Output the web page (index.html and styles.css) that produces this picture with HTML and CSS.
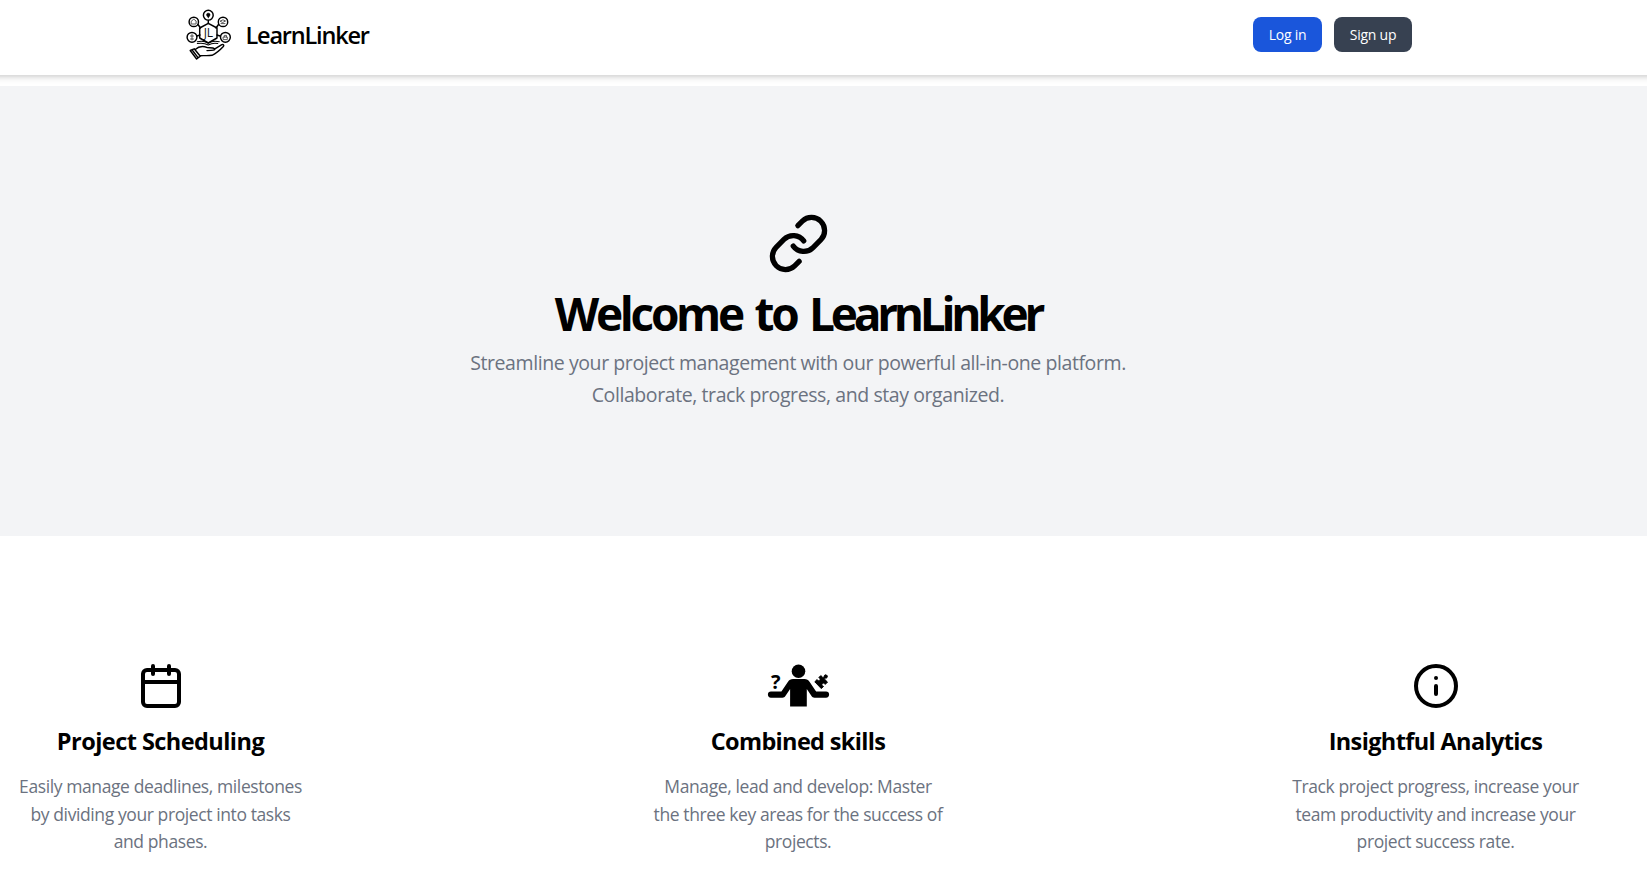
FILE: index.html
```html
<!DOCTYPE html>
<html lang="en">
<head>
<meta charset="utf-8">
<title>LearnLinker</title>
<link rel="stylesheet" href="styles.css">
</head>
<body>
<header class="site-header">
  <div class="bar">
    <a class="brand">
      <svg class="logo" viewBox="0 0 56 60" fill="none" stroke="#000" stroke-width="1.45" stroke-linejoin="round" stroke-linecap="round">
        <path d="M28.3 19.3 37 24v10l-8.700 5-8.600-5V24z"/>
        <path d="M28.300 16.500v3M18 20.500l2.500 3.500M38.500 20.500 36 24M17 32l3-1M37 31l3 1"/>
        <circle cx="28.300" cy="11.200" r="4.900"/>
        <circle cx="13.800" cy="17.900" r="4.700"/>
        <circle cx="43" cy="17.900" r="4.700"/>
        <circle cx="12" cy="33.300" r="4.900"/>
        <circle cx="45.400" cy="33.300" r="4.900"/>
        <path d="M28.300 13.600c-3-3-1.500-4.400 0-4.400s3 1.400 0 4.400z" fill="#000" stroke-width=".6"/>
        <g stroke="#444" stroke-width=".9">
          <path d="M11.500 20h4.600v-3l-2.300-1.800-2.300 1.800zM40.400 17l2.600-1.200 2.600 1.200-2.600 1.300zM41 19.600h4M12 30.500v5.500M10.500 32h3M10.500 35h3M43.500 33h3.800v2.600h-3.800zM44.300 33v-1.600h2.200V33"/>
        </g>
        <text class="logo-mark" x="28.400" y="32.800" text-anchor="middle">JL</text>
        <path d="M17.300 37.700c4-.8 8-.4 11 1.300 3-1.700 7-2.100 11-1.300M17.300 39.500c4-.6 8-.2 11 1.400 3-1.600 6-2 9.500-1.400" stroke-width="1.1"/>
        <path d="M10.200 46.500 14.200 44.800 20.300 52.200 16.600 55zM12 45.800l6 7.800M15.200 45.500c4-3.700 8-3.600 12.200-1.900 3 .2 5.800-.2 7.300 1.100.6 1.400-1.500 1.700-7.700 1.900M34.500 45.200l7.300-4.600c1.600-.6 2.600.6 1.500 1.900-3.800 4.100-7.300 7-11.300 8.800-4.300.7-8 .1-11.700.4"/>
      </svg>
      <span class="brand-name">LearnLinker</span>
    </a>
    <nav class="actions">
      <a class="btn btn-login"><span>Log in</span></a>
      <a class="btn btn-signup"><span>Sign up</span></a>
    </nav>
  </div>
</header>
<main>
  <section class="hero">
    <svg class="hero-icon" viewBox="0 0 24 24" fill="none" stroke="#000" stroke-width="2" stroke-linecap="round" stroke-linejoin="round">
      <path d="M10 13a5 5 0 0 0 7.540.540l3-3a5 5 0 0 0-7.070-7.070l-1.720 1.710"/>
      <path d="M14 11a5 5 0 0 0-7.540-.540l-3 3a5 5 0 0 0 7.070 7.070l1.710-1.710"/>
    </svg>
    <h1>Welcome to <span class="name">LearnLinker</span></h1>
    <p>Streamline your project management with our powerful all-in-one platform.<br>Collaborate, track progress, and stay organized.</p>
  </section>
  <section class="features">
    <article class="feature">
      <svg class="feature-icon" viewBox="0 0 24 24" fill="none" stroke="#000" stroke-width="2" stroke-linecap="round" stroke-linejoin="round">
        <rect x="3" y="4" width="18" height="18" rx="2"/>
        <path d="M16 2v4M8 2v4M3 10h18"/>
      </svg>
      <h2 class="title-scheduling">Project Scheduling</h2>
      <p>Easily manage deadlines, milestones<br>by dividing your project into tasks<br>and phases.</p>
    </article>
    <article class="feature">
      <svg class="feature-icon wide" viewBox="6 7 64 48">
        <circle cx="38.500" cy="16.300" r="6.800"/>
        <path d="M33 24h11.500c2.300 0 3.800 1 5 2.800l6.600 9.700H66a3.050 3.050 0 0 1 0 6.200H54.500c-1.400 0-2.300-.6-3-1.700l-4.700-7V51.400H30.100V34l-4.700 7c-.7 1.100-1.600 1.700-3 1.700H11a3.050 3.050 0 0 1 0-6.200h10.400l6.600-9.700c1.200-1.800 2.700-2.800 5-2.800z"/>
        <text class="question" x="15.700" y="34" text-anchor="middle">?</text>
        <path d="M54.800 26.800l2.300-2.200c.6 1.300 1.900 1.500 2.700.6.800-1 .3-2-1-2.600l2-2 1.700 1.600c1 .5 1.700.1 1.600-.9.100-1.600 2.400-2 3.100-.5.600 1.500-.5 2.500-1.800 2.300-1 0-1.100.9-.5 1.500l2.600 2.500-2.300 2.300c-.6-1.400-2-1.700-2.900-.7-.9 1-.3 2.200 1.200 2.700l-2.200 2.200z" stroke="#000" stroke-width="1" stroke-linejoin="round"/>
      </svg>
      <h2 class="title-skills">Combined skills</h2>
      <p>Manage, lead and develop: Master<br>the three key areas for the success of<br>projects.</p>
    </article>
    <article class="feature">
      <svg class="feature-icon" viewBox="0 0 24 24" fill="none" stroke="#000" stroke-width="2" stroke-linecap="round" stroke-linejoin="round">
        <circle cx="12" cy="12" r="10"/>
        <path d="M12 16v-4M12 8h.010"/>
      </svg>
      <h2 class="title-analytics">Insightful Analytics</h2>
      <p>Track project progress, increase your<br>team productivity and increase your<br>project success rate.</p>
    </article>
  </section>
</main>
</body>
</html>
```
FILE: styles.css
```css
* { box-sizing: border-box; }
body {
  margin: 0;
  background: #fff;
  color: #000;
  font-family: "Open Sans", "Noto Sans", sans-serif;
  overflow: hidden;
}
h1, h2, p { margin: 0; white-space: nowrap; }
svg { display: block; flex: none; }

.site-header {
  height: 75px;
  margin: 0 -10px 11px;
  padding-right: 50px;
  box-shadow: 0 4px 6px -1px rgba(0, 0, 0, .12), 0 2px 4px -1px rgba(0, 0, 0, .08);
}
.bar {
  display: flex;
  justify-content: space-between;
  width: 1232px;
  margin: 0 auto;
  padding-right: 3px;
}
.brand { display: flex; }
.logo { width: 56px; height: 60px; margin: 4px 10px 0 -3px; }
.logo-mark { font-size: 12px; font-weight: 400; fill: #111; stroke: none; }
.question { font-size: 20px; font-weight: 700; }
.brand-name {
  margin-top: 17px;
  font-size: 23.500px;
  line-height: 36px;
  font-weight: 600;
  letter-spacing: -1.200px;
}
.actions { display: flex; gap: 12px; padding-top: 17px; }
.btn {
  display: flex;
  align-items: center;
  justify-content: center;
  height: 35px;
  padding-left: 1px;
  border-radius: 8px;
  color: #fff;
  font-size: 14px;
  letter-spacing: -.250px;
}
.btn-login { width: 69px; background: #1a56db; }
.btn-signup { width: 78px; background: #374151; }

.hero {
  display: flex;
  flex-direction: column;
  align-items: center;
  height: 450px;
  padding: 126px 51px 0 0;
  background: #f3f4f6;
  text-align: center;
}
.hero-icon { width: 63px; height: 63px; }
.hero h1 {
  margin-top: 14px;
  font-size: 46px;
  line-height: 48px;
  font-weight: 700;
  letter-spacing: -3.300px;
  word-spacing: 4px;
}
.hero .name { letter-spacing: -4.250px; }
.hero p {
  margin-top: 10px;
  color: #6b7280;
  font-size: 19.500px;
  line-height: 32px;
  letter-spacing: -.410px;
}

.features {
  display: flex;
  justify-content: space-between;
  padding: 126px 51px 0 0;
}
.feature {
  display: flex;
  flex-direction: column;
  align-items: center;
  width: 321px;
  text-align: center;
}
.feature-icon { width: 48px; height: 48px; }
.feature-icon.wide { width: 64px; }
.feature h2 {
  margin-top: 15px;
  font-size: 23.500px;
  line-height: 32px;
  font-weight: 700;
}
.title-scheduling { letter-spacing: -.550px; }
.title-skills { letter-spacing: -.670px; }
.title-analytics { letter-spacing: -.630px; }
.feature p {
  margin-top: 16px;
  color: #6b7280;
  font-size: 17.500px;
  line-height: 27.600px;
  letter-spacing: -.400px;
}
```
